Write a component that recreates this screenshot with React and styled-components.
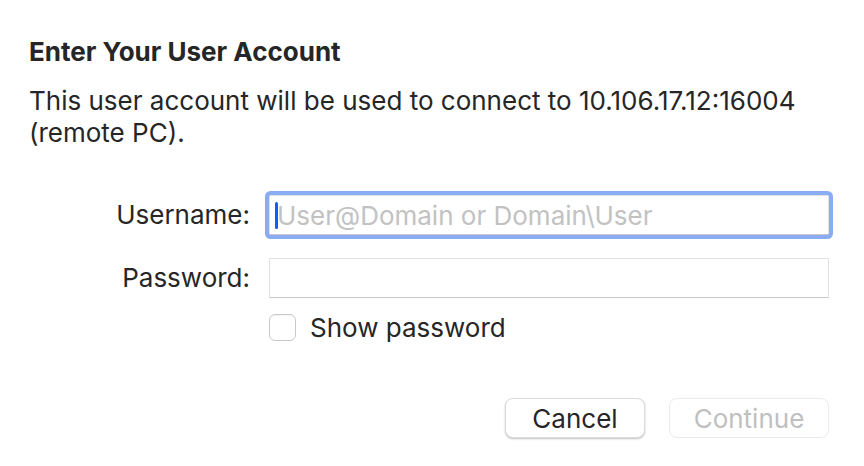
import React, { useState } from "react";
import styled, { createGlobalStyle } from "styled-components";

const GlobalStyle = createGlobalStyle`
  html, body {
    margin: 0;
    padding: 0;
    background: #ffffff;
  }
  body {
    font-family: "Inter", "Liberation Sans", sans-serif;
    color: #262626;
  }
`;

const Dialog = styled.div`
  width: 864px;
  height: 466px;
  box-sizing: border-box;
  padding: 38px 35px 0 29px;
  display: flex;
  flex-direction: column;
`;

const Title = styled.h1`
  margin: 0;
  font-size: 26px;
  line-height: 28px;
  font-weight: 700;
  color: #262626;
`;

const Message = styled.p`
  margin: 19px 0 0;
  font-size: 26px;
  line-height: 32px;
  font-weight: 400;
  color: #262626;
`;

const FormGrid = styled.div`
  margin-top: 46px;
  display: grid;
  grid-template-columns: 221px 560px;
  column-gap: 19px;
  row-gap: 23px;
  align-items: center;
`;

const Label = styled.label`
  justify-self: end;
  font-size: 26px;
  line-height: 28px;
  color: #262626;
`;

const FieldWrap = styled.div`
  height: 40px;
  box-sizing: border-box;
  display: flex;
  align-items: center;
  background: #fff;
  border: 1px solid #e2e2e2;
  border-bottom-color: #c8c8c8;
  box-shadow: ${(p) => (p.focused ? "0 0 0 4px #8aacf5" : "none")};
  border-radius: ${(p) => (p.focused ? "2px" : "0")};
`;

const Input = styled.input`
  flex: 1;
  border: none;
  outline: none;
  background: transparent;
  font-family: inherit;
  font-size: 26px;
  color: #262626;
  padding: 0 0 0 7px;
  height: 100%;
  caret-color: #0a5ff5;
  &::placeholder {
    color: #c2c2c2;
  }
`;

const Caret = styled.span`
  width: 3px;
  height: 27px;
  background: #0a5ff5;
  border-radius: 2px;
  margin-left: 5px;
  margin-right: -8px;
`;

const CheckRow = styled.label`
  grid-column: 2;
  display: flex;
  align-items: center;
  gap: 14px;
  margin-top: -7px;
  font-size: 26px;
  line-height: 27px;
  color: #262626;
  cursor: pointer;
`;

const Box = styled.span`
  width: 27px;
  height: 27px;
  box-sizing: border-box;
  border: 1px solid #c9c9c9;
  border-radius: 6px;
  background: #fff;
  box-shadow: inset 0 1px 1px rgba(0, 0, 0, 0.04);
`;

const Buttons = styled.div`
  margin-top: 57px;
  display: flex;
  justify-content: flex-end;
  gap: 24px;
`;

const Button = styled.button`
  height: 40px;
  width: ${(p) => p.w}px;
  box-sizing: border-box;
  border-radius: 8px;
  font-family: inherit;
  font-size: 26px;
  background: #fff;
  border: 1px solid ${(p) => (p.disabled ? "#ebebeb" : "#dcdcdc")};
  color: ${(p) => (p.disabled ? "#c0c0c0" : "#262626")};
  box-shadow: ${(p) =>
    p.disabled ? "none" : "0 1px 2px rgba(0, 0, 0, 0.25)"};
  padding: 0;
`;

export default function App() {
  const [showPw, setShowPw] = useState(false);
  return (
    <>
      <GlobalStyle />
      <Dialog>
        <Title>Enter Your User Account</Title>
        <Message>
          This user account will be used to connect to 10.106.17.12:16004
          <br />
          (remote PC).
        </Message>
        <FormGrid>
          <Label htmlFor="user">Username:</Label>
          <FieldWrap focused>
            <Caret />
            <Input id="user" placeholder="User@Domain or Domain\User" />
          </FieldWrap>
          <Label htmlFor="pw">Password:</Label>
          <FieldWrap>
            <Input id="pw" type={showPw ? "text" : "password"} />
          </FieldWrap>
          <CheckRow onClick={() => setShowPw(!showPw)}>
            <Box />
            Show password
          </CheckRow>
        </FormGrid>
        <Buttons>
          <Button w={140}>Cancel</Button>
          <Button w={160} disabled>
            Continue
          </Button>
        </Buttons>
      </Dialog>
    </>
  );
}
